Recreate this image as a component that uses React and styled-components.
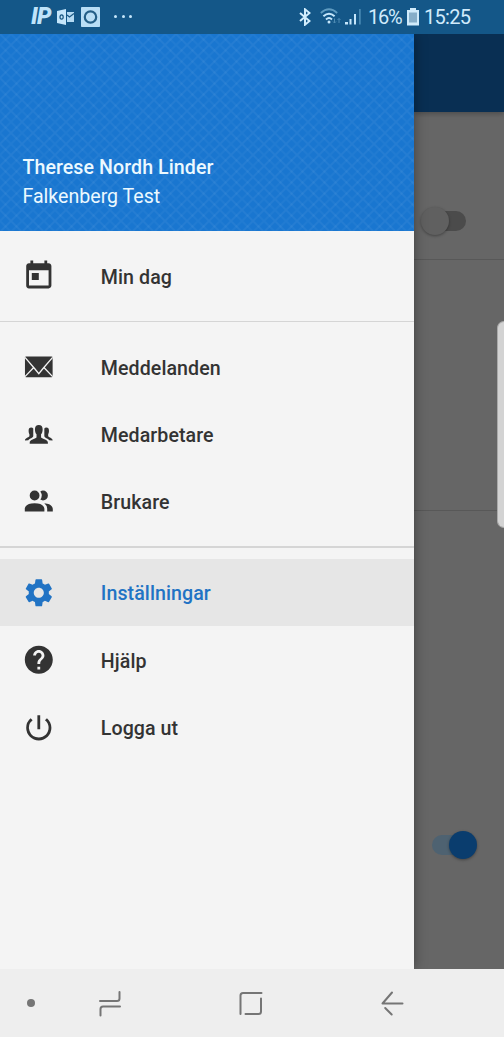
import React from "react";
import styled, { createGlobalStyle, css } from "styled-components";
import {
  MdToday,
  MdSettings,
  MdHelp,
  MdPowerSettingsNew,
} from "react-icons/md";

export default function App() {
  return (
    <Phone>
      <GlobalStyle />
      <StatusBar>
        <Notifications>
          <AppLogo>IP</AppLogo>
          <OutlookIcon />
          <CameraIcon />
          <MoreDots>
            <i />
            <i />
            <i />
          </MoreDots>
        </Notifications>
        <SystemInfo>
          <BluetoothIcon />
          <WifiIcon />
          <SignalIcon />
          <Percent>16%</Percent>
          <BatteryIcon />
          <Clock>15:25</Clock>
        </SystemInfo>
      </StatusBar>

      <Main>
        <Drawer>
          <Header>
            <HeaderPattern />
            <UserName>Therese Nordh Linder</UserName>
            <UserUnit>Falkenberg Test</UserUnit>
          </Header>
          <Menu>
            <MenuItem icon={<MdToday />} label="Min dag" />
            <Divider />
            <MenuItem icon={<MailIcon />} label="Meddelanden" />
            <MenuItem icon={<TeamIcon />} label="Medarbetare" />
            <MenuItem icon={<ClientsIcon />} label="Brukare" />
            <Divider />
            <MenuItem icon={<MdSettings />} label="Inställningar" active />
            <MenuItem icon={<MdHelp />} label="Hjälp" />
            <MenuItem icon={<MdPowerSettingsNew />} label="Logga ut" />
          </Menu>
        </Drawer>

        <Page>
          <AppBar />
          <Setting $height={148} $top={95}>
            <Switch />
          </Setting>
          <Setting $height={251} />
          <Setting $height={458} $top={320} $last>
            <Switch $on />
          </Setting>
          <EdgeHandle />
        </Page>
      </Main>

      <NavBar>
        <NavDot />
        <NavIcon viewBox="0 0 24 28" $left={63}>
          <path d="M2 12H19q2.500 0 2.500-2.500V3M22 17.500H5q-2.500 0-2.500 2.500v6.500" />
        </NavIcon>
        <NavIcon viewBox="0 0 24 28" $left={116.5}>
          <path d="M1.500 25V6.500q0-2.500 2.500-2.500h18.500M22 9.500v13q0 2.500-2.500 2.500H6.500" />
        </NavIcon>
        <NavIcon viewBox="0 0 24 28" $left={118}>
          <path d="M21.500 14.500H1.500L11 3.500M4.200 19l6.500 6.500" />
        </NavIcon>
      </NavBar>
    </Phone>
  );
}

function MenuItem({ icon, label, active }) {
  return (
    <Item $active={active}>
      <ItemIcon>{icon}</ItemIcon>
      <ItemLabel>{label}</ItemLabel>
    </Item>
  );
}

function HeaderPattern() {
  return (
    <PatternSvg>
      <defs>
        <pattern id="weave" width="22" height="22" patternUnits="userSpaceOnUse">
          <path
            d="M0 0l22 22M22 0L0 22"
            stroke="#fff"
            strokeOpacity=".05"
            strokeWidth="1.800"
          />
          <path
            d="M11 0l11 11M0 11l11 11M11 0L0 11M22 11L11 22"
            stroke="#fff"
            strokeOpacity=".035"
            strokeWidth="1.800"
          />
        </pattern>
      </defs>
      <rect width="100%" height="100%" fill="url(#weave)" />
    </PatternSvg>
  );
}

function MailIcon() {
  return (
    <svg viewBox="0 0 34 34">
      <rect x="3" y="6.500" width="28" height="21" rx="1.200" />
      <path
        d="M3 7.500L12.500 18.500L17 24L21.500 18.500L31 7.500M3 27L11.600 18M31 27L22.400 18"
        fill="none"
        stroke="#f4f4f4"
        strokeWidth="1.300"
      />
    </svg>
  );
}

function TeamIcon() {
  return (
    <svg viewBox="0 0 34 34">
      <path d="M17 7c2.500 0 3.900 1.500 3.900 4.300 0 2.300-.6 4-1.600 5.200v3.200c1.500 1.700 6.900 1.900 6.900 5.200V26H7.800v-1.100c0-3.300 5.400-3.500 6.900-5.200v-3.200c-1-1.200-1.600-2.900-1.600-5.200C13.100 8.500 14.500 7 17 7z" />
      <path d="M9.300 9.700c1 0 1.700.3 2.100.9v7.600c-.3 2-3.500 2.300-5 4.300L3 22.700c0-2.700 3.300-2.700 4.500-4.300v-2c-.5-.8-.8-1.900-.8-3.500 0-2 .8-3.200 2.600-3.200z" />
      <path d="M24.700 9.700c-1 0-1.700.3-2.100.9v7.600c.3 2 3.500 2.300 5 4.300l3.400.2c0-2.700-3.300-2.700-4.500-4.300v-2c.5-.8.8-1.900.8-3.500 0-2-.8-3.200-2.600-3.200z" />
    </svg>
  );
}

function ClientsIcon() {
  return (
    <svg viewBox="0 0 24 24">
      <path d="M16 17v2H2v-2s0-4 7-4 7 4 7 4M12.500 7.500A3.500 3.500 0 1 0 9 11a3.500 3.500 0 0 0 3.500-3.500M15.940 13A5.320 5.320 0 0 1 18 17v2h4v-2s0-3.630-6.060-4M15 4a3.390 3.390 0 0 0-1.930.59 5 5 0 0 1 0 5.820A3.390 3.390 0 0 0 15 11a3.500 3.500 0 0 0 0-7z" />
    </svg>
  );
}

function OutlookIcon() {
  return (
    <svg width="17" height="16" viewBox="0 0 17 16">
      <path d="M0 2l9-2v16l-9-2z" fill="#c5e6fb" />
      <path d="M10 3h7v10h-7z" fill="#b4daf3" />
      <path d="M10 6l2.500 2L17 4.500" fill="none" stroke="#175580" strokeWidth="1.200" />
      <ellipse cx="4.600" cy="8" rx="1.600" ry="2.200" fill="none" stroke="#175580" strokeWidth="1.200" />
    </svg>
  );
}

function CameraIcon() {
  return (
    <svg width="19" height="20" viewBox="0 0 19 20">
      <rect width="19" height="20" rx=".8" fill="#b9def6" />
      <circle cx="9.500" cy="10" r="5.700" fill="none" stroke="#245f88" strokeWidth="2.200" />
    </svg>
  );
}

function BluetoothIcon() {
  return (
    <svg width="12" height="18" viewBox="0 0 12 18">
      <path
        d="M1 5l9.500 8L6 16.700V1.300L10.500 5 1 13"
        fill="none"
        stroke="#d2edfd"
        strokeWidth="2"
      />
    </svg>
  );
}

function WifiIcon() {
  return (
    <svg width="22" height="17" viewBox="0 0 22 17" fill="none">
      <path d="M.800 5q8.200-7.500 16.400 0" stroke="#5f9bc0" strokeWidth="1.700" />
      <path d="M3.400 8.200q5.600-5 11.200 0M6 11.400q3-2.700 6 0" stroke="#c5e6fb" strokeWidth="2" />
      <circle cx="9" cy="14" r="1.500" fill="#c5e6fb" />
      <path d="M14.500 10.500v4.500M13 13.500l1.500 1.500 1.500-1.500M19 15v-4.500M17.500 12l1.500-1.500 1.500 1.500" stroke="#4e8bb3" />
    </svg>
  );
}

function SignalIcon() {
  return (
    <svg width="17" height="17" viewBox="0 0 17 17">
      <path d="M0 14h3v2.500H0zM4.500 11h2v5.500h-2zM9 6h2v10.500H9z" fill="#c5e6fb" />
      <path d="M14 1h1.800v15.500H14z" fill="#4586b0" />
    </svg>
  );
}

function BatteryIcon() {
  return (
    <svg width="12" height="18" viewBox="0 0 12 18">
      <path d="M3 0h6v2h3v15.500H0V2h3z" fill="#d0ebfb" />
      <path d="M2 4.500h8v10H2z" fill="#86aec9" />
    </svg>
  );
}

const GlobalStyle = createGlobalStyle`
  * {
    box-sizing: border-box;
  }
  body {
    margin: 0;
    font-family: Roboto, sans-serif;
  }
`;

const Phone = styled.div`
  width: 504px;
  height: 1037px;
  display: flex;
  flex-direction: column;
  overflow: hidden;
`;

const StatusBar = styled.div`
  height: 34px;
  flex: none;
  display: flex;
  align-items: center;
  justify-content: space-between;
  padding: 0 33px 1px 31px;
  background-color: #145788;
  color: #d0ebfc;
`;

const Notifications = styled.div`
  display: flex;
  align-items: center;
  svg {
    margin-right: 7px;
  }
`;

const AppLogo = styled.span`
  width: 26px;
  font-size: 23px;
  font-weight: 900;
  font-style: italic;
  line-height: 20px;
  letter-spacing: -0.800px;
  color: #bfe3fa;
`;

const MoreDots = styled.span`
  display: flex;
  gap: 4.500px;
  margin-left: 7px;
  i {
    width: 3px;
    height: 3px;
    border-radius: 50%;
    background-color: #c5e6fb;
  }
`;

const SystemInfo = styled.div`
  display: flex;
  align-items: center;
  svg:nth-of-type(1) {
    margin-right: 9px;
  }
  svg:nth-of-type(2) {
    margin-right: 3px;
  }
`;

const Percent = styled.span`
  width: 34px;
  margin: 1px 5px 0 6px;
  font-size: 20px;
  line-height: 22px;
  letter-spacing: -1.300px;
`;

const Clock = styled.span`
  width: 47px;
  margin: 1px 0 0 5px;
  font-size: 20px;
  line-height: 22px;
  letter-spacing: -0.700px;
`;

const Main = styled.div`
  height: 935px;
  display: flex;
  overflow: hidden;
`;

const Drawer = styled.div`
  width: 414.400px;
  flex: none;
  background-color: #f4f4f4;
  box-shadow: 0 0 12px rgba(0, 0, 0, 0.4);
  z-index: 1;
`;

const Header = styled.div`
  position: relative;
  height: 197px;
  display: flex;
  flex-direction: column;
  justify-content: flex-end;
  padding: 0 22.400px 20px;
  background-color: #1976d0;
  color: #ecf9ff;
  font-size: 19.600px;
  line-height: 29px;
`;

const PatternSvg = styled.svg`
  position: absolute;
  inset: 0;
  width: 100%;
  height: 100%;
`;

const UserName = styled.div`
  position: relative;
  font-weight: 500;
  letter-spacing: 0.080px;
`;

const UserUnit = styled.div`
  position: relative;
`;

const Menu = styled.div`
  padding: 11.200px 0;
`;

const Item = styled.div`
  height: 67.300px;
  display: flex;
  align-items: center;
  padding-left: 22.400px;
  color: #333;
  ${(p) =>
    p.$active &&
    css`
      background-color: #e6e6e6;
      color: #2173c4;
    `}
`;

const ItemIcon = styled.div`
  width: 78.400px;
  display: flex;
  padding-top: 0.600px;
  svg {
    width: 33.600px;
    height: 33.600px;
    fill: currentColor;
  }
`;

const ItemLabel = styled.span`
  padding-top: 2.400px;
  font-size: 19.600px;
  font-weight: 500;
  letter-spacing: 0.080px;
`;

const Divider = styled.div`
  height: 1.400px;
  margin: 11.200px 0;
  background-color: #d5d5d5;
`;

const Page = styled.div`
  position: relative;
  flex: 1;
  background-color: #666;
`;

const AppBar = styled.div`
  height: 78px;
  background-color: #092f53;
  box-shadow: 0 2px 5px rgba(0, 0, 0, 0.25);
`;

const Setting = styled.div`
  height: ${(p) => p.$height}px;
  padding-top: ${(p) => p.$top || 0}px;
  border-bottom: ${(p) => (p.$last ? "none" : "1.500px solid #585858")};
`;

const Switch = styled.div`
  position: relative;
  width: 34px;
  height: 20px;
  margin-top: 4px;
  margin-left: 17.500px;
  border-radius: 10px;
  background-color: ${(p) => (p.$on ? "#4e6271" : "#4b4b4b")};
  &::after {
    content: "";
    position: absolute;
    top: -4px;
    left: ${(p) => (p.$on ? 17 : -11)}px;
    width: 28px;
    height: 28px;
    border-radius: 50%;
    background-color: ${(p) => (p.$on ? "#0a3d6e" : "#606060")};
    box-shadow: 0 1px 3px rgba(0, 0, 0, 0.35);
  }
`;

const EdgeHandle = styled.div`
  position: absolute;
  top: 287px;
  right: 0;
  width: 7px;
  height: 207px;
  border: 1px solid #aaa;
  border-right: none;
  border-radius: 7px 0 0 7px;
  background-color: #d3d3d3;
`;

const NavBar = styled.div`
  height: 68px;
  flex: none;
  display: flex;
  align-items: center;
  padding-left: 26.500px;
  background-color: #eee;
`;

const NavDot = styled.div`
  width: 8.500px;
  height: 8.500px;
  border-radius: 50%;
  background-color: #757575;
`;

const NavIcon = styled.svg`
  width: 24px;
  height: 28px;
  margin-left: ${(p) => p.$left}px;
  fill: none;
  stroke: #757575;
  stroke-width: 2;
  stroke-linecap: round;
  stroke-linejoin: round;
`;
